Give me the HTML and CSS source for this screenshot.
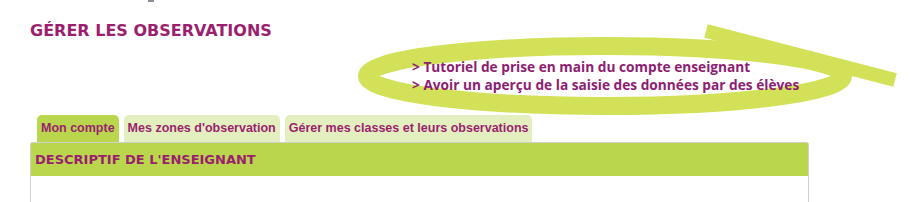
FILE: index.html
```html
<!DOCTYPE html>
<html lang="fr">
<head>
    <meta charset="UTF-8">
    <meta name="viewport" content="width=device-width, initial-scale=1.0">
    <title>Gérer les observations</title>
    <link rel="stylesheet" href="styles.css">
</head>
<body>
    <div class="page">
        <span class="top-mark"></span>
        <h1>GÉRER LES OBSERVATIONS</h1>
        <div class="links">
            <a href="#">&gt; Tutoriel de prise en main du compte enseignant</a>
            <a href="#">&gt; Avoir un aperçu de la saisie des données par des élèves</a>
        </div>
        <ul class="tabs">
            <li class="active">Mon compte</li>
            <li>Mes zones d'observation</li>
            <li>Gérer mes classes et leurs observations</li>
        </ul>
        <div class="panel">
            <h2>DESCRIPTIF DE L'ENSEIGNANT</h2>
            <div class="panel-body"></div>
        </div>
        <!-- hand drawn highlight around the links -->
        <svg class="scribble" width="911" height="202" viewBox="0 0 911 202">
            <ellipse cx="605" cy="76" rx="238" ry="30" fill="none" stroke="#d3e158" stroke-width="18"/>
            <path d="M706 31 L895 80" stroke="#d3e158" stroke-width="14" fill="none"/>
        </svg>
    </div>
</body>
</html>
```

FILE: styles.css
```css
body {
    margin: 0;
    background: #fff;
    font-family: "DejaVu Sans", Verdana, sans-serif;
    color: #9b1f6f;
}
.page {
    position: relative;
    padding: 22px 0 0 30px;
    height: 180px;
    overflow: hidden;
}
.top-mark {
    position: absolute;
    left: 148px;
    top: 0;
    width: 6px;
    height: 2px;
    background: #8a8e96;
}
h1 {
    margin: 0;
    font-size: 16px;
    font-weight: bold;
    line-height: 18px;
    color: #9b1f6f;
}
.links {
    position: relative;
    z-index: 2;
    margin: 18px 0 0 382px;
    display: flex;
    flex-direction: column;
    font-family: "Open Sans", sans-serif;
    font-weight: bold;
    font-size: 13.7px;
    line-height: 18px;
}
.links a {
    color: #8e1d72;
    text-decoration: none;
}
.tabs {
    list-style: none;
    margin: 21px 0 0 0;
    padding: 0 0 0 7px;
    display: flex;
    gap: 5px;
}
.tabs li {
    font-family: "Liberation Sans", Arial, sans-serif;
    font-size: 12.5px;
    font-weight: bold;
    height: 27px;
    line-height: 27px;
    padding: 0 4px;
    background: #e3efbf;
    border-radius: 5px 5px 0 0;
    color: #9b1f6f;
}
.tabs li.active {
    background: #b9d64c;
}
.panel {
    width: 777px;
    border: 1px solid #cfcfcf;
    border-bottom: none;
    border-radius: 3px 3px 0 0;
}
.panel h2 {
    margin: 0;
    height: 33px;
    line-height: 33px;
    padding-left: 4px;
    background: #b9d64c;
    font-size: 13px;
    font-weight: bold;
    color: #9b1f6f;
}
.panel-body {
    height: 30px;
}
.scribble {
    position: absolute;
    left: 0;
    top: 0;
    z-index: 1;
    pointer-events: none;
}
```
